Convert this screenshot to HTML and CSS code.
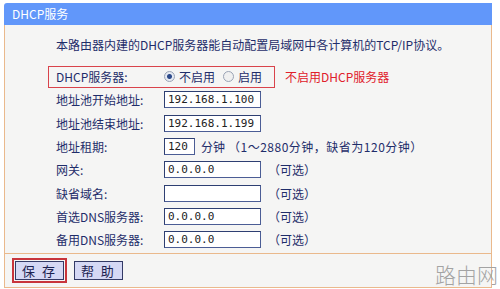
FILE: index.html
```html
<!DOCTYPE html>
<html lang="zh-CN">

<head>
  <meta charset="UTF-8">
  <meta name="viewport" content="width=device-width, initial-scale=1.0">
  <title>DHCP服务</title>
  <link rel="stylesheet" href="styles.css">
</head>

<body>
  <div class="panel">
    <div class="title">DHCP服务</div>
    <div class="content">
      <p class="intro">本路由器内建的DHCP服务器能自动配置局域网中各计算机的TCP/IP协议。</p>
      <div class="form">
        <div class="row">
          <div class="highlight">
            <span class="label">DHCP服务器:</span>
            <label class="radio"><input type="radio" name="dhcp" checked>不启用</label>
            <label class="radio"><input type="radio" name="dhcp">启用</label>
          </div>
          <span class="note">不启用DHCP服务器</span>
        </div>
        <div class="row">
          <span class="label">地址池开始地址:</span>
          <input class="field" type="text" value="192.168.1.100">
        </div>
        <div class="row">
          <span class="label">地址池结束地址:</span>
          <input class="field" type="text" value="192.168.1.199">
        </div>
        <div class="row">
          <span class="label">地址租期:</span>
          <input class="field short" type="text" value="120">
          <span class="unit">分钟</span>
          <span class="hint">（1～2880分钟，缺省为120分钟）</span>
        </div>
        <div class="row">
          <span class="label">网关:</span>
          <input class="field" type="text" value="0.0.0.0">
          <span class="optional">（可选）</span>
        </div>
        <div class="row">
          <span class="label">缺省域名:</span>
          <input class="field" type="text" value="">
          <span class="optional">（可选）</span>
        </div>
        <div class="row">
          <span class="label">首选DNS服务器:</span>
          <input class="field" type="text" value="0.0.0.0">
          <span class="optional">（可选）</span>
        </div>
        <div class="row">
          <span class="label">备用DNS服务器:</span>
          <input class="field" type="text" value="0.0.0.0">
          <span class="optional">（可选）</span>
        </div>
      </div>
    </div>
    <div class="footer">
      <span class="focus"><button>保 存</button></span>
      <button>帮 助</button>
    </div>
    <div class="watermark">路由网</div>
  </div>
</body>

</html>
```

FILE: styles.css
```css
body {
  margin: 0;
  background: #ffffff;
  font-family: "Noto Sans CJK SC", "DejaVu Sans", sans-serif;
  font-size: 12px;
  color: #1f2d6a;
}

.panel {
  position: relative;
  width: 488px;
  margin: 3px 0 0 4px;
}

.title {
  height: 22px;
  line-height: 22px;
  padding-left: 8px;
  background: #6197fa;
  color: #ffffff;
  border-radius: 3px 0 0 0;
}

.content {
  background: #f5f5f4;
  border-left: 1px solid #eab98c;
  border-right: 1px solid #eab98c;
  padding: 12px 0 2px 51px;
}

.intro {
  margin: 0 0 12px 0;
  line-height: 16px;
}

.row {
  display: flex;
  align-items: center;
  height: 23.3px;
}

.label {
  width: 108px;
  flex-shrink: 0;
}

.highlight {
  display: flex;
  align-items: center;
  height: 20px;
  margin-left: -8px;
  padding: 0 12px 0 7px;
  border: 1px solid #d9434b;
}

.radio {
  display: flex;
  align-items: center;
  margin-right: 8px;
}

.radio:last-child {
  margin-right: 0;
}

.radio input {
  appearance: none;
  width: 11px;
  height: 11px;
  margin: 0 4px 0 0;
  border: 1px solid #9aa3b5;
  border-radius: 50%;
  background: #f0f0f0;
}

.radio input:checked {
  background: radial-gradient(circle, #2d4a8a 0 2px, #e6eaf2 3px);
}

.note {
  margin-left: 10px;
  color: #e0202a;
}

.field {
  width: 97px;
  height: 17px;
  box-sizing: border-box;
  padding: 0 3px;
  border: 1px solid #4b5d95;
  border-top-color: #2e3f72;
  border-left-color: #2e3f72;
  background: #ffffff;
  font-family: "DejaVu Sans Mono", monospace;
  font-size: 11px;
  color: #222222;
}

.field.short {
  width: 31px;
}

.unit {
  margin-left: 6px;
}

.hint {
  margin-left: 3px;
  letter-spacing: 0.5px;
}

.optional {
  margin-left: 7px;
}

.footer {
  background: #f5f5f4;
  border: 1px solid #eab98c;
  height: 33px;
  display: flex;
  align-items: center;
  gap: 7px;
  padding-left: 7px;
}

.focus {
  display: inline-flex;
  border: 2px solid #c8353c;
  padding: 1px;
}

button {
  height: 19px;
  padding: 0 6px;
  border: 1px solid #333a66;
  background: #d5d8f4;
  font-family: "Noto Sans CJK SC", sans-serif;
  font-size: 13px;
  line-height: 15px;
  color: #1c2250;
  letter-spacing: 2px;
}

.watermark {
  position: absolute;
  right: -6px;
  bottom: -1px;
  font-size: 21px;
  font-weight: 300;
  color: #a3a3a3;
}
```
